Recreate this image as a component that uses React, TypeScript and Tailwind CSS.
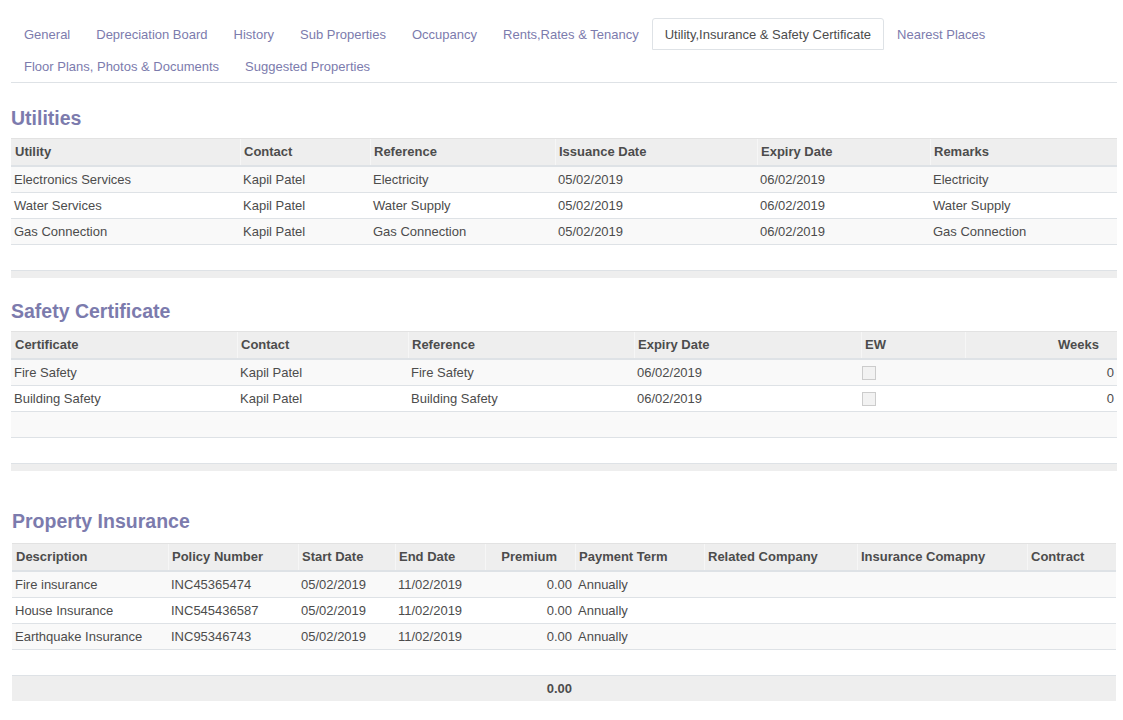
import React from "react";

const tabs1 = [
  "General",
  "Depreciation Board",
  "History",
  "Sub Properties",
  "Occupancy",
  "Rents,Rates & Tenancy",
  "Utility,Insurance & Safety Certificate",
  "Nearest Places",
];
const tabs2 = ["Floor Plans, Photos & Documents", "Suggested Properties"];

type Col = { label: string; right?: boolean };

function Tab({ label, active }: { label: string; active?: boolean }) {
  return (
    <div
      className={
        active
          ? "h-[32px] px-[12px] pt-[7px] pb-[5px] leading-[18px] border border-[#dee2e6] rounded-t-[3px] bg-white text-[#4c4c4c]"
          : "h-[32px] px-[12px] pt-[7px] pb-[5px] leading-[18px] border border-transparent text-[#7c7bad]"
      }
    >
      {label}
    </div>
  );
}

function Title({ children, className }: { children: React.ReactNode; className: string }) {
  return (
    <div className={"text-[19.5px] leading-[24px] font-bold text-[#7c7bad] " + className}>{children}</div>
  );
}

function Grid({
  cols,
  tpl,
  rows,
  fillers,
  footer,
}: {
  cols: Col[];
  tpl: string;
  rows: React.ReactNode[][];
  fillers: number;
  footer: React.ReactNode;
}) {
  const all: (React.ReactNode[] | null)[] = [...rows];
  for (let i = 0; i < fillers; i++) all.push(null);
  return (
    <div className="w-full">
      <div
        className="grid h-[29px] bg-[#eeeeee] border-t border-[#e2e2e2] border-b-2 border-b-[#dee2e6] font-bold"
        style={{ gridTemplateColumns: tpl }}
      >
        {cols.map((c, i) => (
          <div
            key={i}
            className={
              "flex items-center px-[3px] " +
              (i > 0 ? "border-l border-[#f6f6f6] " : "pl-[4px] ") +
              (c.right ? "justify-end pr-[18px]" : "")
            }
          >
            {c.label}
          </div>
        ))}
      </div>
      {all.map((r, ri) => (
        <div
          key={ri}
          className={
            "grid h-[26px] border-b border-[#dee2e6] " + (ri % 2 === 0 ? "bg-[#f9f9f9]" : "bg-white")
          }
          style={{ gridTemplateColumns: tpl }}
        >
          {r
            ? r.map((cell, ci) => (
                <div
                  key={ci}
                  className={
                    "flex items-center px-[3px] whitespace-nowrap " + (cols[ci].right ? "justify-end" : "")
                  }
                >
                  {cell}
                </div>
              ))
            : null}
        </div>
      ))}
      {footer}
    </div>
  );
}

function Check() {
  return <div className="ml-[-2px] w-[14px] h-[14px] border border-[#cccccc] bg-[#f2f2f2]" />;
}

export default function App() {
  return (
    <div
      className="w-[1123px] min-h-[720px] bg-white text-[13px] text-[#4c4c4c] pl-[11px] pr-[6px] pt-[18px]"
      style={{ fontFamily: '"Liberation Sans", Arial, sans-serif' }}
    >
      <div className="border-b border-[#dee2e6]">
        <div className="flex">
          {tabs1.map((t) => (
            <Tab key={t} label={t} active={t.startsWith("Utility,")} />
          ))}
        </div>
        <div className="flex">
          {tabs2.map((t) => (
            <Tab key={t} label={t} />
          ))}
        </div>
      </div>

      <Title className="mt-[23px] mb-[8px]">Utilities</Title>
      <Grid
        tpl="229px 130px 185px 202px 173px 187px"
        cols={[
          { label: "Utility" },
          { label: "Contact" },
          { label: "Reference" },
          { label: "Issuance Date" },
          { label: "Expiry Date" },
          { label: "Remarks" },
        ]}
        rows={[
          ["Electronics Services", "Kapil Patel", "Electricity", "05/02/2019", "06/02/2019", "Electricity"],
          ["Water Services", "Kapil Patel", "Water Supply", "05/02/2019", "06/02/2019", "Water Supply"],
          ["Gas Connection", "Kapil Patel", "Gas Connection", "05/02/2019", "06/02/2019", "Gas Connection"],
        ]}
        fillers={1}
        footer={<div className="h-[7px] bg-[#eeeeee]" />}
      />

      <Title className="mt-[21px] mb-[8px]">Safety Certificate</Title>
      <Grid
        tpl="226px 171px 226px 227px 104px 152px"
        cols={[
          { label: "Certificate" },
          { label: "Contact" },
          { label: "Reference" },
          { label: "Expiry Date" },
          { label: "EW" },
          { label: "Weeks", right: true },
        ]}
        rows={[
          ["Fire Safety", "Kapil Patel", "Fire Safety", "06/02/2019", <Check />, "0"],
          ["Building Safety", "Kapil Patel", "Building Safety", "06/02/2019", <Check />, "0"],
        ]}
        fillers={2}
        footer={<div className="h-[7px] bg-[#eeeeee]" />}
      />

      <div className="pl-[1px] pr-[1px]">
        <Title className="mt-[38px] mb-[10px]">Property Insurance</Title>
        <Grid
          tpl="156px 130px 97px 90px 90px 129px 153px 170px 89px"
          cols={[
            { label: "Description" },
            { label: "Policy Number" },
            { label: "Start Date" },
            { label: "End Date" },
            { label: "Premium", right: true },
            { label: "Payment Term" },
            { label: "Related Company" },
            { label: "Insurance Comapny" },
            { label: "Contract" },
          ]}
          rows={[
            ["Fire insurance", "INC45365474", "05/02/2019", "11/02/2019", "0.00", "Annually", "", "", ""],
            ["House Insurance", "INC545436587", "05/02/2019", "11/02/2019", "0.00", "Annually", "", "", ""],
            ["Earthquake Insurance", "INC95346743", "05/02/2019", "11/02/2019", "0.00", "Annually", "", "", ""],
          ]}
          fillers={1}
          footer={
            <div
              className="grid h-[25px] bg-[#eeeeee] font-bold"
              style={{ gridTemplateColumns: "563px 541px" }}
            >
              <div className="flex items-center justify-end px-[3px]">0.00</div>
              <div />
            </div>
          }
        />
      </div>
    </div>
  );
}
